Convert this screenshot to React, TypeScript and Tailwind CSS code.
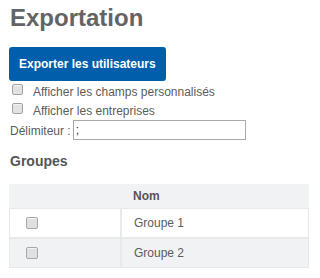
import { useState } from 'react';

const GROUPS = ['Groupe 1', 'Groupe 2'];

function Box({ size = 'sm' }: { size?: 'sm' | 'md' }) {
  return (
    <input
      type="checkbox"
      className={
        size === 'sm'
          ? 'appearance-none block w-[11px] h-[11px] rounded-[2px] border border-[#a3a3a3] bg-[#e2e2e2] shadow-[inset_0_1px_0_#f3f3f3]'
          : 'appearance-none block w-[12px] h-[12px] rounded-[2px] border border-[#a8a8a8] bg-[#e0e0e0] shadow-[inset_0_1px_0_#f3f3f3]'
      }
    />
  );
}

export default function App() {
  const [delim, setDelim] = useState(';');

  return (
    <div className="min-h-[278px] bg-white pl-[9px] pt-[4px] font-['Liberation_Sans',Arial,sans-serif] text-[#5c5c5c]">
      <h1 className="pl-[1px] text-[24px] leading-[28px] font-bold text-[#646464]">Exportation</h1>

      <button className="mt-[15px] h-[34px] px-[10px] rounded-[3px] bg-[#005eaa] text-white text-[12px] font-bold">
        Exporter les utilisateurs
      </button>

      {/* options */}
      <div className="mt-[2px] text-[12px]">
        <label className="flex items-start h-[19px] leading-[19px]">
          <span className="mt-[1px] ml-[3px] mr-[10px]">
            <Box />
          </span>
          Afficher les champs personnalisés
        </label>
        <label className="flex items-start h-[19px] leading-[19px]">
          <span className="mt-[1px] ml-[3px] mr-[10px]">
            <Box />
          </span>
          Afficher les entreprises
        </label>
        <div className="flex items-center h-[19px] pl-[1px]">
          <span>Délimiteur :</span>
          <input
            value={delim}
            onChange={e => setDelim(e.target.value)}
            className="ml-[2px] -mt-[2px] w-[173px] h-[20px] border border-[#a9a9a9] px-[2px] text-[12px] text-[#333] outline-none"
          />
        </div>
      </div>

      <h2 className="mt-[13px] pl-[1px] text-[14px] leading-[16px] font-bold text-[#555]">Groupes</h2>

      <table className="mt-[15px] w-[300px] border-separate border-spacing-0 text-[12px]">
        <thead>
          <tr className="bg-[#f1f2f4]">
            <th className="w-[112px] h-[24px]" />
            <th className="h-[24px] pl-[12px] text-left font-bold text-[#555]">Nom</th>
          </tr>
        </thead>
        <tbody>
          {GROUPS.map((g, i) => (
            <tr key={g} className={i % 2 ? 'bg-[#f1f2f4]' : 'bg-white'}>
              <td className="w-[112px] h-[30px] border border-[#e8e9eb] pl-[16px]">
                <Box size="md" />
              </td>
              <td className="h-[30px] border border-[#e8e9eb] pl-[12px] text-[#5c5c5c]">{g}</td>
            </tr>
          ))}
        </tbody>
      </table>
    </div>
  );
}
